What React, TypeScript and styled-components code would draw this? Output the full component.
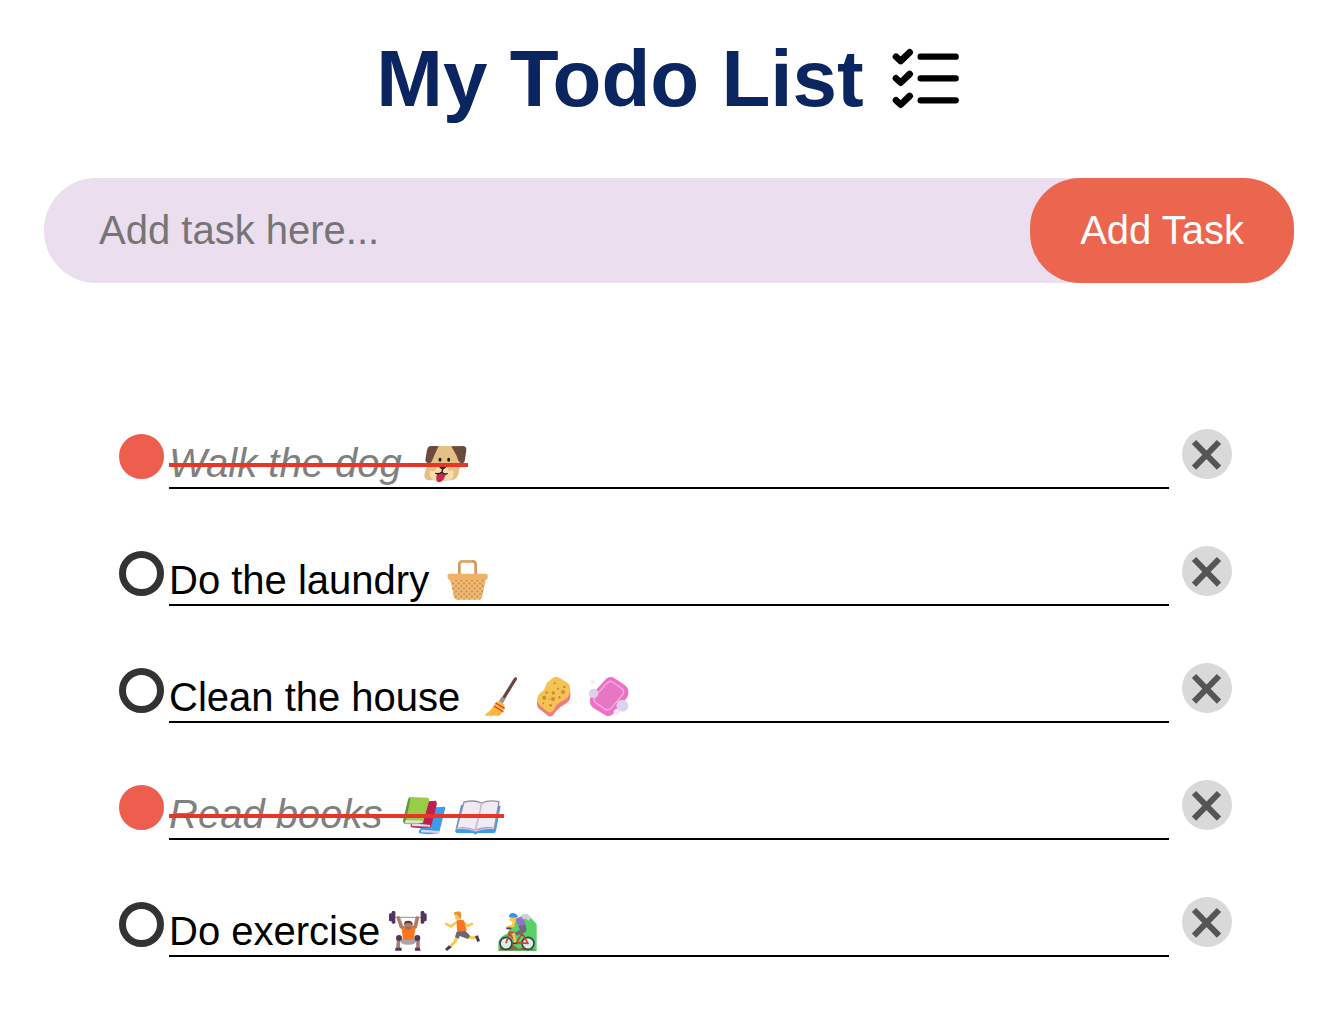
import { useState } from 'react';
import type { FormEvent, ReactNode } from 'react';
import styled, { createGlobalStyle } from 'styled-components';

const GlobalStyle = createGlobalStyle`
  *, *::before, *::after { box-sizing: border-box; }
  body {
    margin: 0;
    background: #fff;
    color: #000;
    font-family: Arial, "Liberation Sans", sans-serif;
  }
`;

const Page = styled.div`
  padding: 34px 0 68px;
`;

const Content = styled.main`
  padding: 0 47px 0 44px;
`;

const Header = styled.header`
  display: flex;
  justify-content: center;
  align-items: flex-start;
  gap: 20px;
  margin-bottom: 52px;
`;

const Title = styled.h1`
  margin: 0;
  color: #0b2561;
  font-size: 80px;
  line-height: 90px;
  font-weight: 700;
`;

const ChecklistIcon = styled.svg`
  width: 81px;
  height: 92px;
  flex: none;
`;

const AddForm = styled.form`
  display: flex;
  height: 105px;
  border-radius: 52px;
  background: #ebdeee;
`;

const TaskInput = styled.input`
  flex: 1;
  min-width: 0;
  padding: 0 20px 0 55px;
  border: 0;
  outline: none;
  background: transparent;
  color: #000;
  font: inherit;
  font-size: 40px;

  &::placeholder {
    color: #757575;
    opacity: 1;
  }
`;

const AddButton = styled.button`
  padding: 0 50px;
  border: 0;
  border-radius: 50px;
  background: #ec664f;
  color: #fff;
  font: inherit;
  font-size: 40px;
  cursor: pointer;
`;

const TaskList = styled.ul`
  display: flex;
  flex-direction: column;
  gap: 57px;
  margin: 146px 0 0;
  padding: 0 62px 0 75px;
  list-style: none;
`;

const TaskRow = styled.li`
  display: flex;
  align-items: flex-start;
`;

const Tick = styled.input`
  appearance: none;
  flex: none;
  width: 45px;
  height: 45px;
  margin: 5px 5px 0 0;
  border: 7px solid #333;
  border-radius: 50%;
  cursor: pointer;

  &:checked {
    border-color: #ee5e4f;
    background: #ee5e4f;
  }
`;

const TaskLabel = styled.label`
  flex: 1;
  min-width: 0;
  padding-top: 12px;
  border-bottom: 2px solid #000;
  font-size: 40px;
  line-height: 44px;
  cursor: pointer;
`;

const TaskText = styled.span<{ $done: boolean }>`
  position: relative;
  display: block;
  width: fit-content;
  min-height: 46px;
  color: ${({ $done }) => ($done ? '#808080' : '#000')};
  font-style: ${({ $done }) => ($done ? 'italic' : 'normal')};

  &::after {
    content: '';
    display: ${({ $done }) => ($done ? 'block' : 'none')};
    position: absolute;
    top: 22px;
    left: 0;
    right: 0;
    height: 4px;
    background: #e83525;
  }
`;

const EmojiSvg = styled.svg`
  width: 55px;
  height: 46px;
  vertical-align: top;
`;

const DeleteButton = styled.button`
  flex: none;
  width: 50px;
  height: 50px;
  margin-left: 13px;
  padding: 0;
  border: 0;
  border-radius: 50%;
  background: #d9d9d9;
  cursor: pointer;

  svg {
    display: block;
    width: 50px;
    height: 50px;
  }
`;

type EmojiName =
  | 'dog' | 'basket' | 'broom' | 'sponge' | 'soap'
  | 'books' | 'openBook' | 'lifter' | 'runner' | 'biker';

const emojis: Record<EmojiName, { origin: string; label: string; art: ReactNode }> = {
  dog: {
    origin: '9 15',
    label: 'dog',
    art: (
      <>
        <path d="M66 34Q106 26 148 34L156 84Q148 92 147 106Q144 130 126 133H60Q42 134 43 118Q44 105 51 92L56 60Z" fill="#e5c084" />
        <path d="M97 82Q84 86 72 106L60 104Q56 118 64 127Q76 138 94 133Q112 139 126 128Q134 118 128 102L116 106Q110 88 97 82Z" fill="#fbdcab" />
        <path d="M60 30H86L72 60Q65 84 54 82Q46 80 46 72L51 42Q53 32 60 30Z" fill="#6d4a3f" />
        <path d="M124 31L160 30Q170 32 169 42L164 76Q161 84 153 82Q146 80 140 60Z" fill="#6d4a3f" />
        <ellipse cx="90" cy="71" rx="4.5" ry="6" fill="#1c1c1c" />
        <ellipse cx="116" cy="71" rx="4.5" ry="6" fill="#1c1c1c" />
        <path d="M80 116Q92 103 108 115L100 132Q93 140 84 138Q76 134 80 116Z" fill="#c42a50" />
        <path d="M90 94H106L98 100ZM98 98L96 108Q88 116 77 112M96 108Q102 117 112 113" fill="none" stroke="#26201e" strokeWidth="4" strokeLinecap="round" strokeLinejoin="round" />
      </>
    ),
  },
  basket: {
    origin: '12 24',
    label: 'basket',
    art: (
      <>
        <defs>
          <pattern id="weave" width="16" height="16" patternUnits="userSpaceOnUse">
            <rect width="16" height="16" fill="#f3bf78" />
            <path d="M4 0L8 4L4 8L0 4ZM12 8L16 12L12 16L8 12Z" fill="#c98b48" stroke="#c98b48" />
          </pattern>
        </defs>
        <path d="M42 87H150L138 142Q137 149 130 149H63Q56 149 54 142Z" fill="url(#weave)" />
        <path d="M70 76V42Q71 34 80 34H110Q118 34 119 42V76" fill="none" stroke="#d39a5c" strokeWidth="8" />
        <path d="M74 42Q74 33 83 33H108" fill="none" stroke="#ecb77c" strokeWidth="3" />
        <rect x="35" y="71" width="120" height="18" rx="5" fill="#efb269" />
      </>
    ),
  },
  broom: {
    origin: '3 21',
    label: 'broom',
    art: (
      <>
        <path d="M136 33L96 98" stroke="#6d4539" strokeWidth="10" strokeLinecap="round" />
        <path d="M101 89L92 104" stroke="#9b8e98" strokeWidth="13" />
        <path d="M76 104Q90 94 103 110Q106 130 88 143H47Q43 142 47 138Q65 126 76 104Z" fill="#fcb944" />
        <path d="M77 105L104 121M72 114L100 132" stroke="#d9402b" strokeWidth="4" />
        <path d="M78 128L62 143M91 132L82 143" stroke="#e9962e" strokeWidth="2" />
      </>
    ),
  },
  sponge: {
    origin: '168 21',
    label: 'sponge',
    art: (
      <>
        <path d="M201 95V112Q203 121 212 126L232 142Q240 149 249 142Q262 122 280 112Q302 100 301 84V68Z" fill="#ef7d7d" />
        <path d="M230 45L248 30Q259 23 269 30L294 45Q304 55 299 76Q294 92 276 99Q258 108 251 126Q242 138 231 130L209 112Q196 101 204 84Q211 73 221 67Q226 60 230 45Z" fill="#f5c353" />
        <g fill="#c98b38">
          <circle cx="254" cy="46" r="3" />
          <circle cx="283" cy="57" r="4" />
          <circle cx="279" cy="72" r="6" />
          <circle cx="264" cy="62" r="3" />
          <circle cx="250" cy="75" r="5" />
          <circle cx="230" cy="74" r="4" />
          <circle cx="223" cy="89" r="6" />
          <circle cx="249" cy="93" r="6" />
          <circle cx="268" cy="88" r="4" />
          <circle cx="242" cy="112" r="4" />
          <circle cx="220" cy="106" r="3" />
          <circle cx="237" cy="94" r="2" />
        </g>
      </>
    ),
  },
  soap: {
    origin: '333 21',
    label: 'soap',
    art: (
      <>
        <path d="M366 79L407 34Q416 24 429 28L464 51Q477 60 475 78Q474 86 467 94L430 137Q421 147 409 143L369 119Q357 108 360 92Z" fill="#ee71c5" />
        <path d="M376 84L412 44Q420 37 428 42L456 62Q465 70 458 80L423 121Q415 129 406 124L378 105Q367 96 376 84Z" fill="#e877c3" stroke="#fbacea" strokeWidth="4" />
        <g fill="#dad3e9">
          <circle cx="371" cy="76" r="14" />
          <circle cx="457" cy="113" r="18" />
        </g>
        <circle cx="368" cy="42" r="6" fill="#f1eef7" />
        <circle cx="440" cy="132" r="9" fill="#eee9f5" />
      </>
    ),
  },
  books: {
    origin: '-3 9',
    label: 'books',
    art: (
      <>
        <path d="M98 56L150 53Q152 58 149 66L132 133Q98 138 73 133Q69 128 76 120Z" fill="#3d9be9" />
        <path d="M80 122L133 126L131 132L77 130Z" fill="#ddd5ee" />
        <path d="M80 38L122 35Q127 39 125 48L108 114Q76 119 49 115Q43 109 52 100Z" fill="#be1f50" />
        <path d="M52 103L106 108L105 113L50 111Z" fill="#e8def0" />
        <path d="M47 24L99 26Q104 28 102 37L84 102Q52 108 27 104Q23 99 28 92Z" fill="#98ce47" />
        <path d="M47 24Q40 24 39 32L24 94Q23 102 29 104L34 91Z" fill="#5b993c" />
        <path d="M32 94L83 95L82 101L29 101Z" fill="#e9e4f0" />
      </>
    ),
  },
  openBook: {
    origin: '162 9',
    label: 'open book',
    art: (
      <>
        <path d="M198 48L317 50L303 125Q302 132 295 132H248L242 137L235 132H187Q179 131 181 124Z" fill="#3f9be3" />
        <path d="M207 39Q240 32 260 42Q284 32 312 38L298 118Q267 112 240 124Q216 113 185 118Z" fill="#f0eaf5" stroke="#998fa5" strokeWidth="4" strokeLinejoin="round" />
        <path d="M260 42L253 77L241 123" fill="none" stroke="#c6bdd0" strokeWidth="5" />
        <path d="M185 119Q216 115 240 126Q270 115 298 119" fill="none" stroke="#cdc3db" strokeWidth="4" />
      </>
    ),
  },
  lifter: {
    origin: '0 18',
    label: 'person lifting weights',
    art: (
      <>
        <path d="M30 43H137" stroke="#918b98" strokeWidth="3" />
        <g fill="#50365f">
          <rect x="35" y="24" width="11" height="38" rx="4" />
          <rect x="27" y="31" width="10" height="24" rx="4" />
          <rect x="122" y="24" width="11" height="38" rx="4" />
          <rect x="131" y="31" width="9" height="24" rx="4" />
        </g>
        <path d="M55 45L64 71L74 77M112 45L106 71L96 77" fill="none" stroke="#ad7b6c" strokeWidth="11" strokeLinecap="round" strokeLinejoin="round" />
        <path d="M65 77L73 69H99L106 77L101 111H69Z" fill="#ff7619" />
        <rect x="73" y="54" width="24" height="28" rx="11" fill="#b27b6b" />
        <path d="M73 66Q70 53 85 53Q99 53 98 68L91 60H79Z" fill="#5b3c32" />
        <path d="M79 74Q85 78 92 74" fill="none" stroke="#704238" strokeWidth="2" />
        <path d="M56 105L54 135M114 105L114 135" stroke="#ad7b6c" strokeWidth="11" />
        <path d="M60 104Q72 112 84 110Q98 112 112 104L107 119Q99 126 85 125Q70 126 63 119Z" fill="#aaa4ad" />
        <circle cx="57" cy="105" r="9" fill="#50365f" />
        <circle cx="112" cy="105" r="9" fill="#50365f" />
        <path d="M47 134H65V143H45ZM105 134H119L122 143H105Z" fill="#50365f" />
      </>
    ),
  },
  runner: {
    origin: '165 18',
    label: 'person running',
    art: (
      <>
        <path d="M226 60L213 70L199 63M247 55L263 68L276 63" fill="none" stroke="#ffc64c" strokeWidth="8" strokeLinecap="round" strokeLinejoin="round" />
        <path d="M232 101L224 117L210 132M258 100L274 104L288 104" fill="none" stroke="#ffc64c" strokeWidth="9" strokeLinejoin="round" />
        <path d="M229 53Q238 48 251 52L260 80L255 91L232 89Z" fill="#ff7526" />
        <path d="M230 86L256 84Q266 92 270 99L264 108L249 103L239 99L236 107L225 102Z" fill="#6d6674" />
        <path d="M223 28H242V47Q235 54 226 48Z" fill="#ffc64c" />
        <path d="M222 36Q221 25 231 26Q239 22 243 31Q247 39 241 47L234 39L229 33Z" fill="#e69338" />
        <path d="M207 127L215 133L201 144L195 138ZM285 100L294 97L300 114L292 117Z" fill="#50365f" />
      </>
    ),
  },
  biker: {
    origin: '330 18',
    label: 'person mountain biking',
    art: (
      <>
        <path d="M355 116Q363 98 381 92L396 66L420 41Q434 28 447 38L470 63V144H355Z" fill="#56d267" />
        <path d="M420 44Q435 25 447 37L454 45L445 53L437 46L428 51Z" fill="#d4cbdc" />
        <path d="M360 135Q385 110 415 137Q438 129 470 142H358Z" fill="#916341" />
        <circle cx="378" cy="121" r="18" fill="#d7f1e4" stroke="#493958" strokeWidth="5" />
        <circle cx="444" cy="121" r="18" fill="#d7f1e4" stroke="#493958" strokeWidth="5" />
        <path d="M378 121L389 88L426 91L410 119L389 93M410 119L444 121L427 93" fill="none" stroke="#bd4a30" strokeWidth="5" strokeLinejoin="round" />
        <path d="M402 50L400 68L383 73M421 86L401 94L406 121" fill="none" stroke="#ffc64c" strokeWidth="8" strokeLinecap="round" strokeLinejoin="round" />
        <path d="M404 48L423 41Q436 52 438 68L421 75Z" fill="#9572c9" />
        <path d="M414 69L435 65Q442 75 438 86Q425 93 410 98L403 89L420 80Z" fill="#70697a" />
        <rect x="389" y="36" width="19" height="19" rx="8" fill="#ffc64c" />
        <path d="M387 42Q387 30 399 30Q412 31 414 43L402 44Z" fill="#2f96e8" />
        <path d="M379 76H394M399 121H412" stroke="#493958" strokeWidth="5" />
      </>
    ),
  },
};

function Emoji({ name }: { name: EmojiName }) {
  const { origin, label, art } = emojis[name];
  return (
    <EmojiSvg viewBox={`${origin} 165 138`} role="img" aria-label={label}>
      {art}
    </EmojiSvg>
  );
}

interface Task {
  id: number;
  text: string;
  emojis: EmojiName[];
  done: boolean;
}

const initialTasks: Task[] = [
  { id: 1, text: 'Walk the dog ', emojis: ['dog'], done: true },
  { id: 2, text: 'Do the laundry ', emojis: ['basket'], done: false },
  { id: 3, text: 'Clean the house ', emojis: ['broom', 'sponge', 'soap'], done: false },
  { id: 4, text: 'Read books ', emojis: ['books', 'openBook'], done: true },
  { id: 5, text: 'Do exercise', emojis: ['lifter', 'runner', 'biker'], done: false },
];

export default function App() {
  const [tasks, setTasks] = useState(initialTasks);
  const [draft, setDraft] = useState('');

  const addTask = (event: FormEvent) => {
    event.preventDefault();
    const text = draft.trim();
    if (!text) return;
    setTasks([...tasks, { id: Date.now(), text, emojis: [], done: false }]);
    setDraft('');
  };

  const toggle = (id: number) =>
    setTasks(tasks.map((task) => (task.id === id ? { ...task, done: !task.done } : task)));

  const remove = (id: number) => setTasks(tasks.filter((task) => task.id !== id));

  return (
    <>
      <GlobalStyle />
      <Page>
        <Header>
          <Title>My Todo List</Title>
          <ChecklistIcon viewBox="12 -6 243 276" fill="none" stroke="#000" strokeLinecap="round" strokeLinejoin="round" aria-hidden="true">
            {[62, 127, 193].map((y) => (
              <g key={y}>
                <path d={`M48 ${y}L62 ${y + 13}L89 ${y - 13}`} strokeWidth="20" />
                <path d={`M122 ${y}H227`} strokeWidth="19" />
              </g>
            ))}
          </ChecklistIcon>
        </Header>
        <Content>
          <AddForm onSubmit={addTask}>
            <TaskInput
              type="text"
              aria-label="New task"
              placeholder="Add task here..."
              value={draft}
              onChange={(event) => setDraft(event.target.value)}
            />
            <AddButton type="submit">Add Task</AddButton>
          </AddForm>
          <TaskList>
            {tasks.map((task) => (
              <TaskRow key={task.id}>
                <Tick
                  type="checkbox"
                  id={`task-${task.id}`}
                  checked={task.done}
                  onChange={() => toggle(task.id)}
                />
                <TaskLabel htmlFor={`task-${task.id}`}>
                  <TaskText $done={task.done}>
                    {task.text}
                    {task.emojis.map((name) => (
                      <Emoji key={name} name={name} />
                    ))}
                  </TaskText>
                </TaskLabel>
                <DeleteButton type="button" aria-label="Delete task" onClick={() => remove(task.id)}>
                  <svg viewBox="96 24 150 150" fill="none" stroke="#555" strokeWidth="18" aria-hidden="true">
                    <path d="M132 63L207 140M207 63L132 140" />
                  </svg>
                </DeleteButton>
              </TaskRow>
            ))}
          </TaskList>
        </Content>
      </Page>
    </>
  );
}
